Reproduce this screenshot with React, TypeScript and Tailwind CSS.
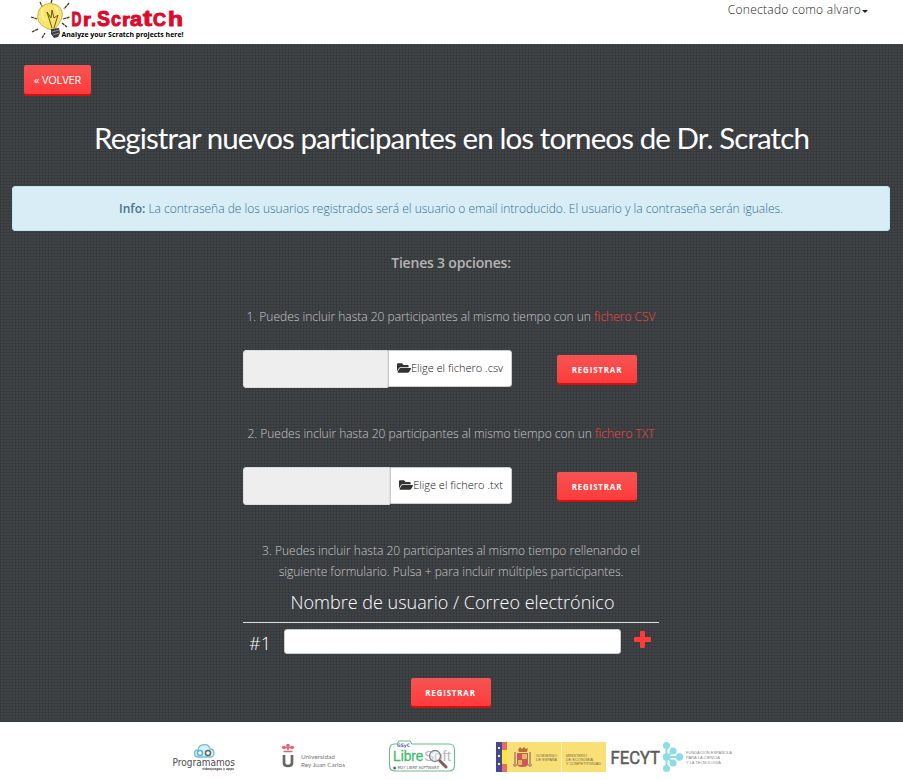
import React from "react";
import { FaFolderOpen } from "react-icons/fa";

const texture =
  "bg-[#404346] bg-[repeating-linear-gradient(0deg,rgba(24,27,30,0.16)_0px_1px,transparent_1px_3px),repeating-linear-gradient(90deg,rgba(24,27,30,0.16)_0px_1px,transparent_1px_3px)]";
const redButton =
  "rounded-[2px] bg-linear-to-b from-[#f55353] to-[#ff3a3a] text-white shadow-[0_2px_0_#d11212]";

const logoLetters = [
  { c: "D", x: 71.5, y: 26, size: 20, w: 10 },
  { c: "r", x: 83, y: 25.5, size: 19, w: 8 },
  { c: ".", x: 91, y: 25.5, size: 20, w: 5 },
  { c: "S", x: 97, y: 26, size: 22, w: 13 },
  { c: "c", x: 111, y: 26, size: 20, w: 10 },
  { c: "r", x: 122, y: 25.5, size: 19, w: 8 },
  { c: "a", x: 130, y: 25.5, size: 20, w: 12 },
  { c: "t", x: 143, y: 25.5, size: 22, w: 9 },
  { c: "C", x: 153, y: 26, size: 18, w: 13 },
  { c: "h", x: 168, y: 26, size: 21, w: 15 },
];

function DrScratchLogo() {
  return (
    <svg className="block" width="160" height="44" viewBox="28 0 160 44">
      <g stroke="#473a13" strokeWidth="1.3" strokeDasharray="3 0.6">
        <path d="M40 2l3 6M52 0l-1 3M69 3l-5 6M31 17l6 2M63 19l7-2M32 32l6-3M42 38l3-5M62 23l5 4" />
      </g>
      <path d="M38 14C39 6 47 2 54 4c8 2 10 10 7 16-2 5-5 6-6 10l-7-1c-6-3-12-7-10-15z" fill="#fbe468" stroke="#a99133" strokeWidth=".7" />
      <path d="M43 8c-2 5-1 10 3 13M55 7c3 3 3 7 2 10" fill="none" stroke="#fff39a" strokeWidth="2" />
      <path d="M52 28l-5-16 4 6 1-8 2 8 4-3-4 13" fill="none" stroke="#66531d" strokeWidth="1" />
      <path d="M51 29l8-1 1 5-2 4-4 1-3-4z" fill="#3c3c3c" />
      <path d="M52 32l7-2M53 35l6-2" stroke="#999" />
      <g fill="#dc0b2d" stroke="#dc0b2d" strokeWidth="1" strokeLinejoin="round" fontFamily="Liberation Sans, sans-serif" fontWeight="700">
        {logoLetters.map((l) => (
          <text key={l.x} x={l.x} y={l.y} fontSize={l.size} textLength={l.w} lengthAdjust="spacingAndGlyphs">{l.c}</text>
        ))}
      </g>
      <text x="61.500" y="36.500" fill="#000" fontFamily="Open Sans, sans-serif" fontWeight="700" fontSize="7.200" textLength="122" lengthAdjust="spacingAndGlyphs">Analyze your Scratch projects here!</text>
    </svg>
  );
}

function FileRow({ label, left }: { label: string; left: string }) {
  return (
    <div className="flex h-[38px] items-start">
      <div className={`h-[38px] rounded-l-[3px] border border-[#dedede] bg-[#eee] ${left}`} />
      <div className="flex h-[37px] flex-1 items-center justify-center rounded-r-[3px] border border-[#ccc] bg-white pb-[2px] text-[11px] text-[#111]">
        <FaFolderOpen className="h-[14px] w-[14px] shrink-0 text-[#333]" />
        <span className="whitespace-nowrap">{label}</span>
      </div>
      <button className={`mt-[5px] mr-[22px] ml-[45px] h-[28px] w-[80px] shrink-0 text-[8px] font-bold tracking-[0.8px] ${redButton}`}>REGISTRAR</button>
    </div>
  );
}

function Programamos() {
  return (
    <svg className="mt-[20px] shrink-0 overflow-visible" width="64" height="30" viewBox="172 742 64 30">
      <path d="M197 757c-4-2-3-7 1-7 1-7 11-7 12-1 5 0 5 7 1 8z" fill="#d8f0f7" stroke="#70bed4" strokeWidth="1.300" />
      <circle cx="200" cy="753" r="2.500" fill="#fff" stroke="#59b5d0" strokeWidth="1.500" />
      <circle cx="208" cy="753" r="2.500" fill="#fff" stroke="#666" strokeWidth="1.500" />
      <text x="172.500" y="765.500" fontSize="10" fill="#4c4c4c" fontFamily="DejaVu Sans, sans-serif" textLength="62.500" lengthAdjust="spacingAndGlyphs">Programamos</text>
      <text x="202" y="769.500" fontSize="3.500" fontWeight="700" fill="#555" fontFamily="DejaVu Sans, sans-serif" textLength="32" lengthAdjust="spacingAndGlyphs">videojuegos y apps</text>
    </svg>
  );
}

function Urjc() {
  return (
    <svg className="mt-[20px] ml-[45px] shrink-0" width="66" height="30" viewBox="281 742 66 30">
      <path d="M283.500 751.500h9M282 747.500h12M288 744v6" stroke="#e5637a" strokeWidth="1.600" />
      <circle cx="284" cy="747.500" r="1.800" fill="#e5637a" /><circle cx="288" cy="745.500" r="1.800" fill="#e5637a" /><circle cx="292" cy="747.500" r="1.800" fill="#e5637a" />
      <path d="M284 755v8q0 3 4 3t4-3v-8" fill="none" stroke="#666" strokeWidth="2.700" />
      <text x="301" y="759" fontSize="6.300" fill="#777" fontFamily="Lato, sans-serif" textLength="34" lengthAdjust="spacingAndGlyphs">Universidad</text>
      <text x="301" y="766.500" fontSize="6.300" fill="#777" fontFamily="Lato, sans-serif" textLength="44" lengthAdjust="spacingAndGlyphs">Rey Juan Carlos</text>
    </svg>
  );
}

function LibreSoft() {
  return (
    <svg className="mt-[18px] ml-[42px] shrink-0" width="67" height="34" viewBox="389 740 67 34">
      <path d="M395 744h2l2-3h11l2 3h37q5.500 0 5.500 6v15q0 6-5.500 6h-54q-5.500 0-5.500-6v-15q0-6 5.500-6z" fill="#fff" stroke="#69bd8c" strokeWidth="1.100" />
      <text x="397" y="747" fontSize="4.800" fontWeight="700" fill="#6559a2" fontFamily="DejaVu Sans, sans-serif" textLength="13" lengthAdjust="spacingAndGlyphs">GSyC</text>
      <text x="393" y="761" fontSize="14" fill="#43b96d" stroke="#43b96d" strokeWidth=".3" fontFamily="Liberation Sans, sans-serif" textLength="30.500" lengthAdjust="spacingAndGlyphs">Libre</text>
      <text x="424" y="761" fontSize="14" fill="#b9b9b9" fontFamily="Liberation Sans, sans-serif" textLength="27" lengthAdjust="spacingAndGlyphs">Soft</text>
      <circle cx="435" cy="756" r="5.500" fill="#e9f0f8" fillOpacity=".45" stroke="#818181" strokeWidth="1.300" />
      <path d="M440 761l6 6" stroke="#7d5e51" strokeWidth="3" strokeLinecap="round" />
      <text x="393" y="768.500" fontSize="4" fontStyle="italic" fill="#666" fontFamily="DejaVu Sans, sans-serif" textLength="46" lengthAdjust="spacingAndGlyphs">● MUY LIBRE SOFTWARE</text>
    </svg>
  );
}

function Gobierno() {
  return (
    <svg className="mt-[20px] ml-[40px] shrink-0" width="110" height="30" viewBox="496 742 110 30">
      <path d="M496 742h110v30H496z" fill="#f8df76" />
      <path d="M496 742h6v30h-6z" fill="#454994" />
      <path d="M502 742h5v8h-5zM502 764h5v8h-5z" fill="#e66c67" />
      <path d="M502 750h5v14h-5z" fill="#fbe43d" />
      <path d="M499 747v2M499 755v2M499 763v2" stroke="#fff59c" strokeWidth="2" />
      <path d="M515 752v15M530 752v15M513 765h4M528 765h4" stroke="#bf9a70" strokeWidth="2" />
      <path d="M517 753h11v11q0 3-5.500 3t-5.500-3z" fill="#c95b55" />
      <path d="M518 750l2-3 2 2 2-2 2 2 2-1-1 4h-8z" fill="#b66e3c" />
      <path d="M522 754h5v5h-5zM518 760h4v5h-4z" fill="#e8b568" />
      <path d="M561.500 742v30" stroke="#fff0ad" />
      <g fill="#75694a" fontFamily="Liberation Sans, sans-serif" fontSize="3.600">
        <text x="536" y="757" textLength="21">GOBIERNO</text><text x="536" y="761.200" textLength="21">DE ESPAÑA</text>
        <text x="566" y="757" textLength="21">MINISTERIO</text><text x="566" y="761.200" textLength="27">DE ECONOMÍA</text><text x="566" y="765.400" textLength="35" lengthAdjust="spacingAndGlyphs">Y COMPETITIVIDAD</text>
      </g>
    </svg>
  );
}

function Fecyt() {
  return (
    <svg className="mt-[20px] ml-[4px] shrink-0" width="123" height="30" viewBox="610 742 123 30">
      <text x="610.500" y="763.500" fontSize="18" fill="#5b5b5b" stroke="#5b5b5b" strokeWidth=".5" fontFamily="Roboto, sans-serif" textLength="49.500" lengthAdjust="spacingAndGlyphs">FECYT</text>
      <path d="M666.500 746v22M666.500 757h13M666.500 757l6-5M666.500 757l6 5" stroke="#8adde2" strokeWidth="2" />
      <g fill="#8adde2"><circle cx="666.500" cy="745.500" r="3.500" /><circle cx="666.500" cy="757" r="3.700" /><circle cx="666.500" cy="768.500" r="3.500" /><circle cx="673" cy="751" r="3.500" /><circle cx="673" cy="763" r="3.500" /><circle cx="679.500" cy="757" r="3.700" /></g>
      <g fill="#888" fontFamily="Liberation Sans, sans-serif" fontSize="4">
        <text x="686" y="754" textLength="46" lengthAdjust="spacingAndGlyphs">FUNDACIÓN ESPAÑOLA</text><text x="686" y="759" textLength="34" lengthAdjust="spacingAndGlyphs">PARA LA CIENCIA</text><text x="686" y="764" textLength="35" lengthAdjust="spacingAndGlyphs">Y LA TECNOLOGÍA</text>
      </g>
    </svg>
  );
}

export default function App() {
  return (
    <div className="flex h-[780px] w-[903px] flex-col overflow-hidden bg-white font-['Open_Sans',sans-serif]">
      <header className="flex h-[44px] shrink-0 justify-between pr-[35px] pl-[28px]">
        <DrScratchLogo />
        <div className="flex h-5 items-center text-[12px] font-light tracking-[0.26px] text-[#222]">
          <span>Conectado como alvaro</span>
          <span className="mt-[3px] ml-[1px] border-x-[3px] border-t-[3px] border-x-transparent border-t-[#222]" />
        </div>
      </header>

      <main className={`flex h-[678px] shrink-0 flex-col ${texture}`}>
        <button className={`mt-[21px] ml-6 h-[29px] w-[67px] shrink-0 pt-px text-[11px] tracking-[-0.2px] ${redButton}`}>« VOLVER</button>
        <h1 className="mt-[24px] h-10 shrink-0 text-center font-['Lato',sans-serif] text-[29.5px] leading-10 tracking-[-0.9px] whitespace-nowrap text-white">Registrar nuevos participantes en los torneos de Dr. Scratch</h1>
        <div className="mt-[28px] mr-[13px] ml-3 flex h-[45px] shrink-0 items-center justify-center rounded-[3px] border border-[#bce8f1] bg-[#d9edf7] text-[12px] font-light text-[#31708f]">
          <p className="whitespace-nowrap"><b className="font-semibold text-[#4a7289]">Info:</b> La contraseña de los usuarios registrados será el usuario o email introducido. El usuario y la contraseña serán iguales.</p>
        </div>

        <section className="ml-[243px] w-[416px] text-center text-[12px] leading-[21px] font-light text-[#c8c8c8]">
          <h2 className="mt-[21px] mb-[33px] text-[14px] font-semibold tracking-[-0.2px] text-[#b4b4b4]">Tienes 3 opciones:</h2>
          <p className="whitespace-nowrap">1. Puedes incluir hasta 20 participantes al mismo tiempo con un <a className="text-[#ff4545]">fichero CSV</a></p>
          <div className="mt-[23px]"><FileRow label="Elige el fichero .csv" left="w-[145px]" /></div>
          <p className="mt-[35px] whitespace-nowrap">2. Puedes incluir hasta 20 participantes al mismo tiempo con un <a className="text-[#ff4545]">fichero TXT</a></p>
          <div className="mt-[23px]"><FileRow label="Elige el fichero .txt" left="w-[147px]" /></div>
          <p className="mt-[35px] whitespace-nowrap">3. Puedes incluir hasta 20 participantes al mismo tiempo rellenando el<br />siguiente formulario. Pulsa + para incluir múltiples participantes.</p>
          <div className="h-[41px] border-b border-[#ddd] pl-[3px] text-[18px] leading-[40px] whitespace-nowrap text-white">Nombre de usuario / Correo electrónico</div>
          <div className="flex h-[31px] items-start pt-[6px]">
            <span className="mt-[4px] w-[41px] pr-[7px] text-[18px] text-white">#1</span>
            <input className="h-[25px] w-[337px] rounded-[3px] border border-[#ccc] bg-white" />
            <svg className="mt-[2px] ml-[13px]" width="17" height="17" viewBox="0 0 17 17">
              <path d="M7 0h3q1 0 1 1v5h5q1 0 1 1v3q0 1-1 1h-5v5q0 1-1 1H7q-1 0-1-1v-5H1q-1 0-1-1V7q0-1 1-1h5V1q0-1 1-1z" fill="#ff3a3a" />
            </svg>
          </div>
          <button className={`mt-[24px] mr-px h-[28px] w-[80px] text-[8px] font-bold tracking-[0.8px] ${redButton}`}>REGISTRAR</button>
        </section>
      </main>

      <footer className="flex h-[58px] shrink-0 items-start bg-white pl-[172px]">
        <Programamos />
        <Urjc />
        <LibreSoft />
        <Gobierno />
        <Fecyt />
      </footer>
    </div>
  );
}
